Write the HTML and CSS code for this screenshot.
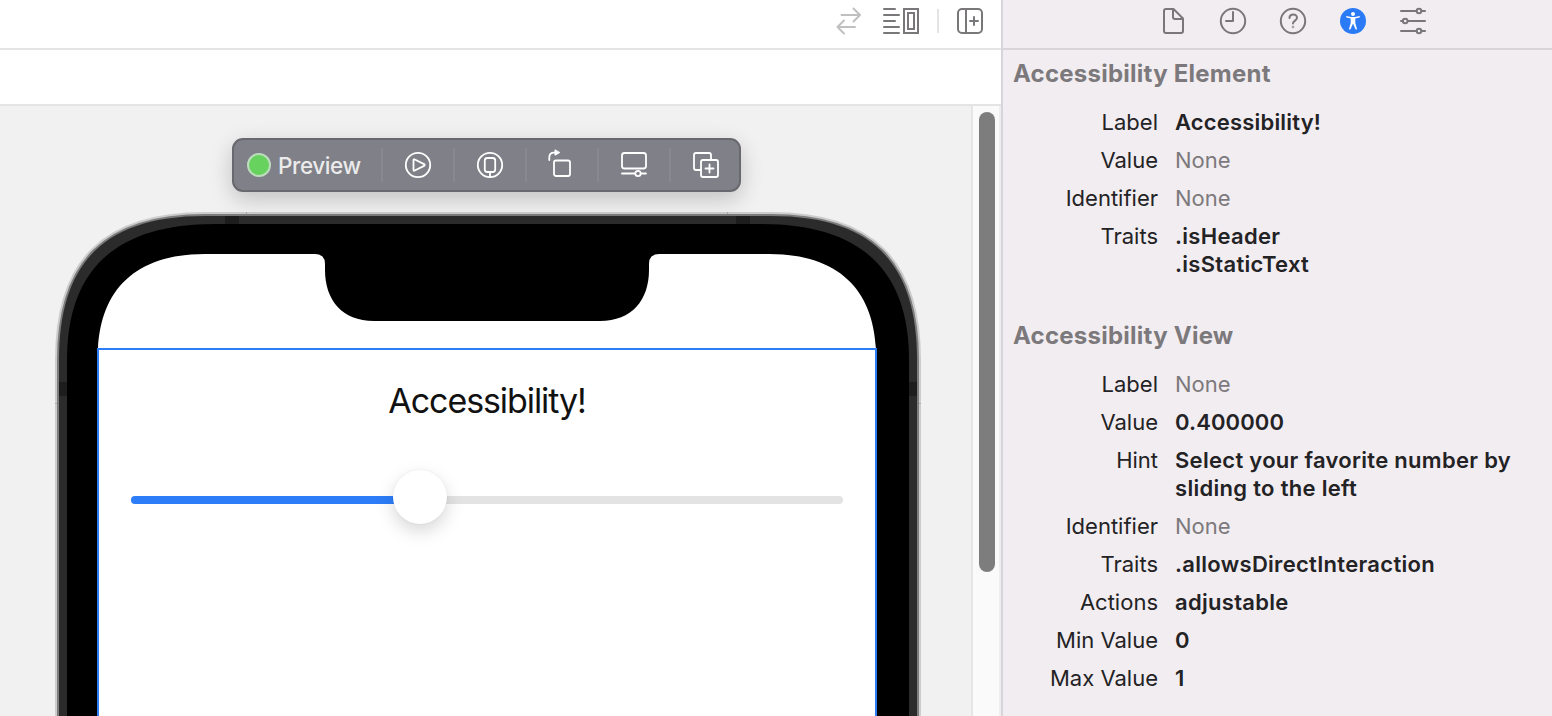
FILE: index.html
```html
<!DOCTYPE html>
<html lang="en">
<head>
<meta charset="utf-8">
<title>Accessibility Inspector</title>
<link rel="stylesheet" href="styles.css">
</head>
<body>
<div class="app">
  <main class="editor">
    <header class="editor-bar">
      <svg class="icon faded swap" width="26" height="28" viewBox="0 0 26 28"><path d="M5.500 8H24M17.500 1.500 24 8l-6.500 6.500M19 20H1.500M8 13.500 1.500 20 8 26.500"/></svg>
      <svg class="icon layout" width="38" height="28" viewBox="0 0 38 28"><path d="M1 2h11M1 8h15M1 14h11M1 20h15M1 26h15M21 2h14v24H21zM25 6h6v16h-6z"/></svg>
      <span class="bar-divider"></span>
      <svg class="icon add-editor" width="28" height="28" viewBox="0 0 28 28"><rect x="2" y="2" width="24" height="24" rx="4"/><path d="M10 2v24M14 14h8M18 10v8"/></svg>
    </header>
    <div class="jump-bar"></div>
    <div class="workspace">
      <section class="canvas">
        <svg class="phone" width="972" height="610" viewBox="0 106 972 610">
          <g class="rims">
            <path class="rim-light" d="M59 730V360C59 262 105 216 205 216H771C871 216 917 262 917 360V730z"/>
            <path class="rim-mid" d="M59 730V360C59 262 105 216 205 216H771C871 216 917 262 917 360V730z"/>
          </g>
          <path fill="#2b2b2b" d="M59 730V360C59 262 105 216 205 216H771C871 216 917 262 917 360V730z"/>
          <path fill="#1d1d1d" d="M225 216h14v9h-14zM736 216h14v9h-14zM59 382h9v14h-9zM908 382h9v14h-9z"/>
          <path fill="#aaa" d="M246 212h1v2h-1zM727 212h1v2h-1zM55 403h2v1h-2zM919 403h2v1h-2z"/>
          <path d="M67 730V360C67 275 110 224 215 224H761C866 224 909 275 909 360V730z"/>
          <path fill="#fff" d="M98 730V349C101 290 135 254 205 254H315Q325 254 325 264V270C325 300 342 321 374 321H600C632 321 649 300 649 270V264Q649 254 659 254H769C839 254 873 290 876 349V730z"/>
        </svg>
        <div class="toolbar">
          <div class="preview"><span class="status"></span><span class="preview-text">Preview</span></div>
          <div class="tool"><svg width="28" height="28" viewBox="0 0 28 28"><circle cx="14" cy="14" r="12.200"/><path d="M9.500 9.200v9.600q0 1.400 1.300.7l9.300-4.600q1.300-.9 0-1.800l-9.300-4.600q-1.300-.7-1.300.7z"/></svg></div>
          <div class="tool"><svg width="28" height="28" viewBox="0 0 28 28"><circle cx="14" cy="14" r="12.200"/><rect x="8.800" y="7" width="10.400" height="14" rx="2.500"/><path d="M14 21v5"/></svg></div>
          <div class="tool"><svg width="28" height="32" viewBox="0 0 28 32"><rect x="6" y="11.500" width="16" height="15.500" rx="2"/><path d="M1.300 11V8.500Q1.300 3.700 6 3.700h2"/><path class="solid" d="M7 1.200v5l4.500-2.500z"/></svg></div>
          <div class="tool"><svg width="28" height="28" viewBox="0 0 28 28"><rect x="2" y="2" width="24" height="15.500" rx="2.500"/><path d="M2 22.500h13M21 22.500h5"/><circle cx="18" cy="22.500" r="2.700"/></svg></div>
          <div class="tool"><svg width="28" height="28" viewBox="0 0 28 28"><path d="M9 19H4q-2 0-2-2V4q0-2 2-2h13q2 0 2 2v5"/><rect x="9" y="9" width="17" height="17" rx="2"/><path d="M17.500 13.500v8M13.500 17.500h8"/></svg></div>
        </div>
        <div class="screen">
          <h1 class="screen-title">Accessibility!</h1>
          <div class="slider"><div class="slider-fill"></div><div class="thumb"></div></div>
        </div>
      </section>
      <div class="scroll-track"><div class="scroll-thumb"></div></div>
    </div>
  </main>
  <aside class="inspector">
    <nav class="tabs">
      <svg class="icon" width="28" height="28" viewBox="0 0 28 28"><path d="M7 2h7.500l9.500 9.500V24q0 2-2 2H7q-2 0-2-2V4q0-2 2-2zM14 2v8q0 2 2 2h8"/></svg>
      <svg class="icon" width="28" height="28" viewBox="0 0 28 28"><circle cx="14" cy="14" r="12.200"/><path d="M14 5v9H7"/></svg>
      <svg class="icon" width="28" height="28" viewBox="0 0 28 28"><circle cx="14" cy="14" r="12.200"/><path d="M10.500 11c0-4.600 7.500-4.600 7.500-.2 0 2.700-4 2.900-4 5.700"/><circle class="dot" cx="14" cy="20" r=".3"/></svg>
      <svg width="28" height="28" viewBox="0 0 28 28"><circle cx="14" cy="14" r="13" fill="#2b7bf6"/><circle cx="14" cy="7" r="2" fill="#fff"/><path fill="#fff" d="M7.500 9 12 10h4l4.500-1q.8.8 0 1.500L16.300 11.500v4.500l1.700 6q-.7 1-1.500.3L14.200 17h-.4l-2.300 5.300q-.8.700-1.500-.3l1.700-6v-4.500L7.500 10.500q-.8-.7 0-1.500z"/></svg>
      <svg class="icon" width="28" height="28" viewBox="0 0 28 28"><path d="M2 4h15.500M22.500 4H26M2 14h2M9 14h17M2 24h15.500M22.500 24H26"/><circle cx="20" cy="4" r="2.300"/><circle cx="6.200" cy="14" r="2.300"/><circle cx="20" cy="24" r="2.300"/></svg>
    </nav>
    <section class="group">
      <h2>Accessibility Element</h2>
      <dl>
        <dt>Label</dt><dd class="name">Accessibility!</dd>
        <dt>Value</dt><dd class="none">None</dd>
        <dt>Identifier</dt><dd class="none">None</dd>
        <dt>Traits</dt><dd>.isHeader<br>.isStaticText</dd>
      </dl>
    </section>
    <section class="group">
      <h2>Accessibility View</h2>
      <dl>
        <dt>Label</dt><dd class="none">None</dd>
        <dt>Value</dt><dd class="decimal">0.400000</dd>
        <dt>Hint</dt><dd>Select your favorite number by<br>sliding to the left</dd>
        <dt>Identifier</dt><dd class="none">None</dd>
        <dt>Traits</dt><dd>.allowsDirectInteraction</dd>
        <dt>Actions</dt><dd>adjustable</dd>
        <dt>Min Value</dt><dd>0</dd>
        <dt>Max Value</dt><dd>1</dd>
      </dl>
    </section>
  </aside>
</div>
</body>
</html>
```
FILE: styles.css
```css
* { box-sizing: border-box; }
body { margin: 0; font-family: Inter, "Liberation Sans", sans-serif; }
h1, h2, dl, dd { margin: 0; }
svg { display: block; flex: none; }
.app { display: flex; width: 1552px; height: 716px; overflow: hidden; background: #fff; }
.editor { width: 1001px; display: flex; flex-direction: column; }
.editor-bar { height: 50px; padding: 0 17px 6px 0; border-bottom: 2px solid #e5e4e5; display: flex; align-items: center; justify-content: flex-end; }
.icon { fill: none; stroke: #79777a; stroke-width: 2; stroke-linecap: round; stroke-linejoin: round; }
.faded { stroke: #c1c0c1; }
.swap { margin-right: 21px; }
.layout { margin-right: 16px; stroke-linejoin: miter; }
.bar-divider { width: 2px; height: 24px; background: #e4e4e4; margin-right: 17px; }
.jump-bar { height: 56px; border-bottom: 2px solid #e5e4e5; }
.workspace { flex: 1; min-height: 0; display: flex; }
.canvas { position: relative; width: 971px; background: #f1f1f1; overflow: hidden; }
.phone { position: absolute; left: 0; top: 0; }
.rims path { fill: none; }
.rims .rim-light { stroke: #cccccc; stroke-width: 8; }
.rims .rim-mid { stroke: #7c7c7c; stroke-width: 4; }
.toolbar { position: absolute; left: 232px; top: 32px; width: 509px; height: 54px; border: 2px solid #68686e; border-radius: 11px; background: #808088; display: flex; align-items: center; box-shadow: 0 7px 22px rgba(0,0,0,.2); }
.preview { flex: none; width: 147px; height: 100%; display: flex; align-items: center; padding-left: 13px; gap: 7px; }
.status { width: 24px; height: 24px; border: 2px solid #bddcbd; border-radius: 50%; background: #67d35e; }
.preview-text { color: #ebebeb; font-size: 22.5px; font-weight: 500; letter-spacing: -.4px; }
.tool { flex: none; width: 72px; height: 34px; border-left: 2px solid #88888f; display: flex; align-items: center; justify-content: center; }
.tool svg { fill: none; stroke: #fff; stroke-width: 1.8; stroke-linecap: round; stroke-linejoin: round; }
.tool .solid { fill: #fff; stroke-width: 1; }
.screen { position: absolute; left: 97px; top: 242px; width: 780px; height: 400px; border: 2px solid #2d7df8; padding: 30px 32px; }
.screen-title { font-size: 34px; line-height: 42px; font-weight: 400; text-align: center; color: #111; letter-spacing: -1.08px; }
.slider { position: relative; margin-top: 74px; height: 8px; border-radius: 4px; background: #e3e3e4; }
.slider-fill { width: 40%; height: 8px; border-radius: 4px; background: #2d7df8; }
.thumb { position: absolute; left: 262px; top: -26px; width: 54px; height: 54px; border-radius: 50%; background: #fff; box-shadow: 0 0 2px rgba(0,0,0,.07), 0 7px 18px rgba(0,0,0,.16); }
.scroll-track { width: 30px; border-left: 2px solid #e6e6e6; border-right: 2px solid #efeeef; background: #fafafa; padding: 6px 0 0 6px; }
.scroll-thumb { width: 16px; height: 460px; border-radius: 8px; background: #7d7d7d; }
.inspector { flex: 1; border-left: 2px solid #d7d5d9; background: #f2edf1; color: #232224; }
.tabs { height: 50px; border-bottom: 2px solid #d7d5d8; padding: 0 0 6px 31px; display: flex; align-items: center; justify-content: center; gap: 32px; }
.group { padding: 8px 0 0 10px; height: 262px; font-size: 22px; line-height: 28px; }
.group h2 { font-size: 24px; line-height: 32px; font-weight: 700; color: #7c797c; letter-spacing: .24px; }
.group dl { display: grid; grid-template-columns: 145px 1fr; column-gap: 17px; row-gap: 10px; margin-top: 18px; }
dt { text-align: right; }
dd { font-weight: 600; white-space: nowrap; letter-spacing: .3px; }
dd.name { letter-spacing: .18px; }
dd.decimal { letter-spacing: .12px; }
dd.none { font-weight: 400; color: #7c797c; letter-spacing: 0; }
```
